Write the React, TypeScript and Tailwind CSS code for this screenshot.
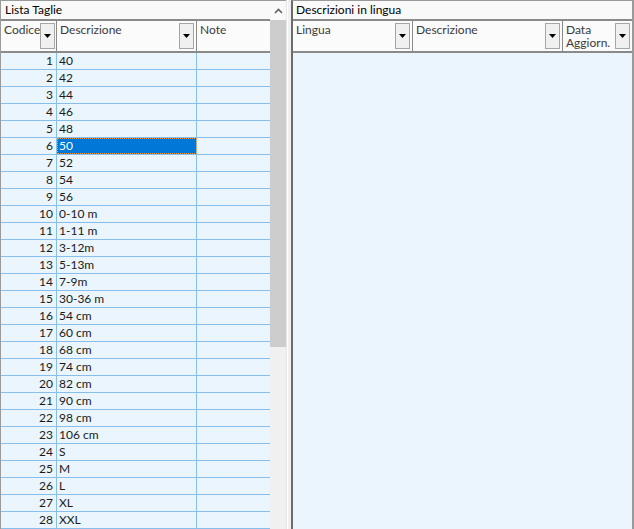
import React from "react";

const rows = [
  "40", "42", "44", "46", "48", "50", "52", "54", "56", "0-10 m",
  "1-11 m", "3-12m", "5-13m", "7-9m", "30-36 m", "54 cm", "60 cm", "68 cm",
  "74 cm", "82 cm", "90 cm", "98 cm", "106 cm", "S", "M", "L", "XL", "XXL",
];

function DropButton() {
  return (
    <div className="w-[15px] h-[26px] shrink-0 border border-[#a5a5a5] bg-[#f0f0f0] flex items-center justify-center">
      <svg width="7" height="4" viewBox="0 0 7 4">
        <path d="M0 0h7L3.5 4z" fill="#000" />
      </svg>
    </div>
  );
}

function HeadCell({ label, width, last }: { label: React.ReactNode; width: string; last?: boolean }) {
  return (
    <div
      className={`${width} h-full flex items-center justify-between pl-[3px] pr-[2px] ${last ? "" : "border-r border-[#8a8a8a]"}`}
    >
      <div className="self-start pt-[2px] text-[#3a3a3a] leading-[13px]">{label}</div>
      <DropButton />
    </div>
  );
}

export default function App() {
  return (
    <div className="flex w-[634px] h-[529px] overflow-hidden bg-[#f0f0f0] text-[12px] font-['Lato','Liberation_Sans',sans-serif] text-[#1a1a1a]">
      {/* Lista Taglie */}
      <div className="w-[286px] h-full flex border-l border-t border-[#9a9a9a]">
        <div className="w-[269px] flex flex-col">
          <div className="h-[18px] bg-[#f9f9f9] pl-[4px] leading-[18px] text-black">Lista Taglie</div>
          <div className="h-[34px] bg-[#fbfbfb] border-y-2 border-[#8a8a8a] flex">
            <HeadCell label="Codice" width="w-[56px]" />
            <HeadCell label="Descrizione" width="w-[140px]" />
            <div className="flex-1 pl-[3px] pt-[2px] leading-[13px] text-[#3a3a3a]">Note</div>
          </div>
          <div className="flex-1 bg-[#ebf5fd]">
            {rows.map((r, i) => (
              <div key={i} className="h-[17px] flex border-b border-[#86bfeb] leading-[16px]">
                <div className="w-[56px] border-r border-[#86bfeb] text-right pr-[3px]">{i + 1}</div>
                {i === 5 ? (
                  <div className="w-[140px] border-r border-[#86bfeb] bg-[#0078d7] text-white pl-[2px] outline outline-1 outline-dotted outline-[#e89a4a] -outline-offset-1">
                    {r}
                  </div>
                ) : (
                  <div className="w-[140px] border-r border-[#86bfeb] pl-[2px]">{r}</div>
                )}
                <div className="flex-1" />
              </div>
            ))}
          </div>
        </div>
        {/* scrollbar */}
        <div className="w-[16px] flex flex-col bg-[#f0f0f0]">
          <div className="h-[19px] flex items-center justify-center bg-[#f9f9f9]">
            <svg width="9" height="6" viewBox="0 0 9 6">
              <path d="M1 5l3.5-3.5L8 5" stroke="#606060" strokeWidth="1.6" fill="none" />
            </svg>
          </div>
          <div className="h-[327px] bg-[#cdcdcd]" />
          <div className="flex-1" />
        </div>
      </div>

      {/* splitter */}
      <div className="w-[5px] h-full flex">
        <div className="w-[1px] bg-[#e6e6e6]" />
        <div className="w-[1px] bg-white" />
        <div className="flex-1 bg-[#f0f0f0]" />
      </div>

      {/* Descrizioni in lingua */}
      <div className="flex-1 h-full flex flex-col border-l-2 border-l-[#6b6b6b] border-t border-t-[#9a9a9a] border-r-2 border-r-[#9a9a9a]">
        <div className="h-[18px] bg-[#f9f9f9] pl-[3px] leading-[18px] text-black">Descrizioni in lingua</div>
        <div className="h-[34px] bg-[#fbfbfb] border-y-2 border-[#8a8a8a] flex">
          <HeadCell label="Lingua" width="w-[120px]" />
          <HeadCell label="Descrizione" width="w-[150px]" />
          <HeadCell
            label={
              <>
                Data
                <br />
                Aggiorn.
              </>
            }
            width="flex-1"
            last
          />
        </div>
        <div className="flex-1 bg-[#ebf5fd]" />
      </div>
    </div>
  );
}
